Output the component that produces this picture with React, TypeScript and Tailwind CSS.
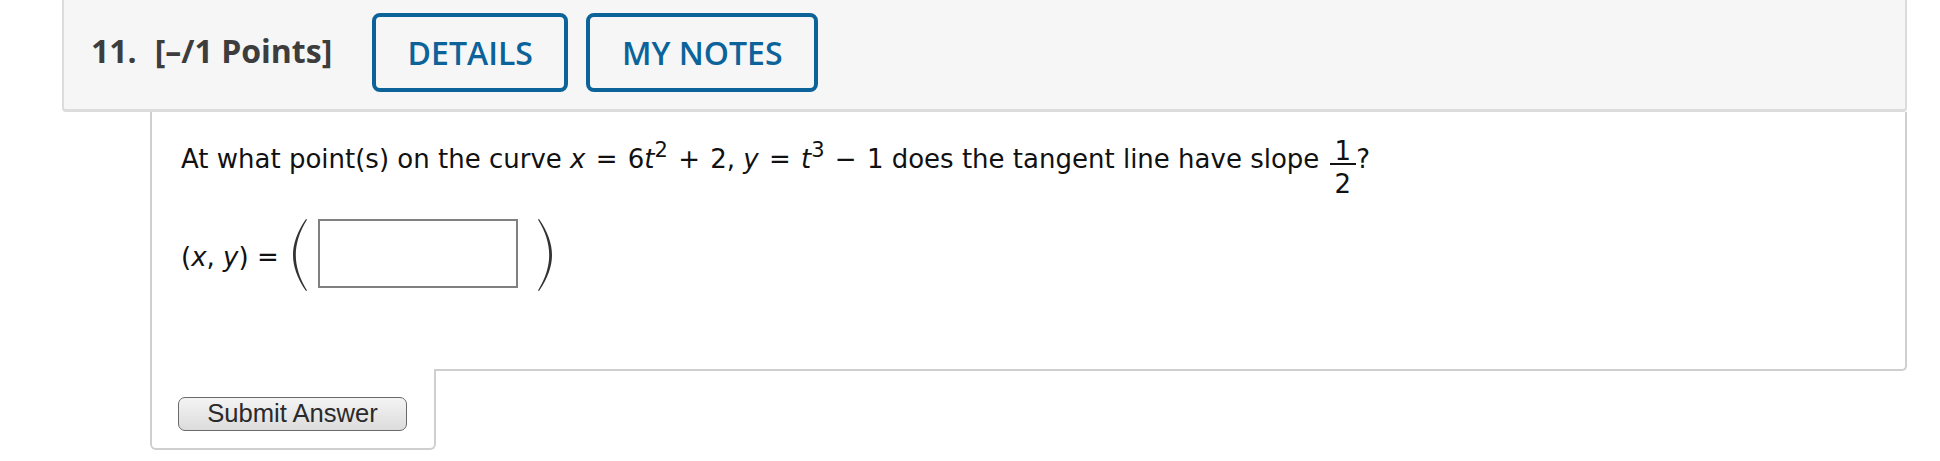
import React from "react";

function ParenL() {
  return (
    <svg width="16" height="74" viewBox="0 0 16 74" className="block">
      <path
        d="M14 1 C5 14 1 26 1 37 C1 48 5 60 14 73 L15 72.4 C7.3 60 3.8 48 3.8 37 C3.8 26 7.3 14 15 1.6 Z"
        fill="#333"
      />
    </svg>
  );
}

function ParenR() {
  return (
    <svg width="16" height="74" viewBox="0 0 16 74" className="block">
      <path
        d="M2 1 C11 14 15 26 15 37 C15 48 11 60 2 73 L1 72.4 C8.7 60 12.2 48 12.2 37 C12.2 26 8.7 14 1 1.6 Z"
        fill="#333"
      />
    </svg>
  );
}

function Op({ children }: { children: React.ReactNode }) {
  return <span className="mx-[2px]">{children}</span>;
}

export default function App() {
  return (
    <div className="w-[1940px] h-[461px] bg-white overflow-hidden">
      <div className="ml-[62px] w-[1845px]">
        {/* Header */}
        <div className="flex items-start h-[112px] bg-[#f6f6f6] border-l-2 border-r-2 border-b-[3px] border-[#dcdcdc] rounded-b-[4px] pl-[27px] pt-[13px] font-['Open_Sans',sans-serif]">
          <div className="mt-[16px] leading-[44px] text-[32px] font-bold text-[#3d3d3d] whitespace-nowrap">
            <span>11.</span>
            <span className="ml-[18px]">[–/1 Points]</span>
          </div>
          <button className="ml-[40px] w-[196px] h-[79px] flex items-center justify-center border-[4px] border-[#0c6399] rounded-[8px] text-[32px] font-semibold text-[#0c6399] leading-[44px]">
            DETAILS
          </button>
          <button className="ml-[18px] w-[232px] h-[79px] flex items-center justify-center border-[4px] border-[#0c6399] rounded-[8px] text-[32px] font-semibold text-[#0c6399] leading-[44px]">
            MY NOTES
          </button>
        </div>

        {/* Question body */}
        <div className="ml-[88px]">
          <div className="h-[259px] bg-white border-l-2 border-r-2 border-b-2 border-[#cfcfcf] rounded-br-[5px] pl-[29px] pt-[27px] font-['DejaVu_Sans',Verdana,sans-serif] text-[26px] text-[#111] leading-[30px]">
            <p className="whitespace-nowrap">
              At what point(s) on the curve <i>x</i> <Op>=</Op> 6<i>t</i>
              <span className="text-[21px] align-[11px] leading-none">2</span> <Op>+</Op> 2, <i>y</i> <Op>=</Op> <i>t</i>
              <span className="text-[21px] align-[11px] leading-none">3</span> <Op>−</Op> 1 does the tangent line have slope{" "}
              <span className="inline-flex flex-col items-center align-[8px] ml-[2px]">
                <span className="h-[24px] leading-[24px] px-[5px]">1</span>
                <span className="block w-full h-[2px] bg-[#111]"></span>
                <span className="h-[24px] leading-[24px] mt-[7px] px-[5px]">2</span>
              </span>
              ?
            </p>
            <div className="flex items-start mt-[22px]">
              <span className="mt-[24px] leading-[30px] whitespace-nowrap">
                (<i>x</i>, <i>y</i>) =
              </span>
              <div className="ml-[13px]">
                <ParenL />
              </div>
              <div className="ml-[10px] mt-[1px] w-[200px] h-[69px] border-2 border-[#808080] bg-white"></div>
              <div className="ml-[19px]">
                <ParenR />
              </div>
            </div>
          </div>

          {/* Submit tab */}
          <div className="relative -mt-[2px] w-[286px] h-[81px] bg-white border-l-2 border-r-2 border-b-2 border-[#cfcfcf] rounded-b-[6px] pl-[26px] pt-[28px]">
            <button className="w-[229px] h-[34px] flex items-center justify-center rounded-[7px] border-[1.5px] border-[#6a6a6a] bg-gradient-to-b from-[#f4f4f4] to-[#dcdcdc] font-['Liberation_Sans',Arial,sans-serif] text-[25.6px] leading-none text-[#2a2a2a]">
              Submit Answer
            </button>
          </div>
        </div>
      </div>
    </div>
  );
}
